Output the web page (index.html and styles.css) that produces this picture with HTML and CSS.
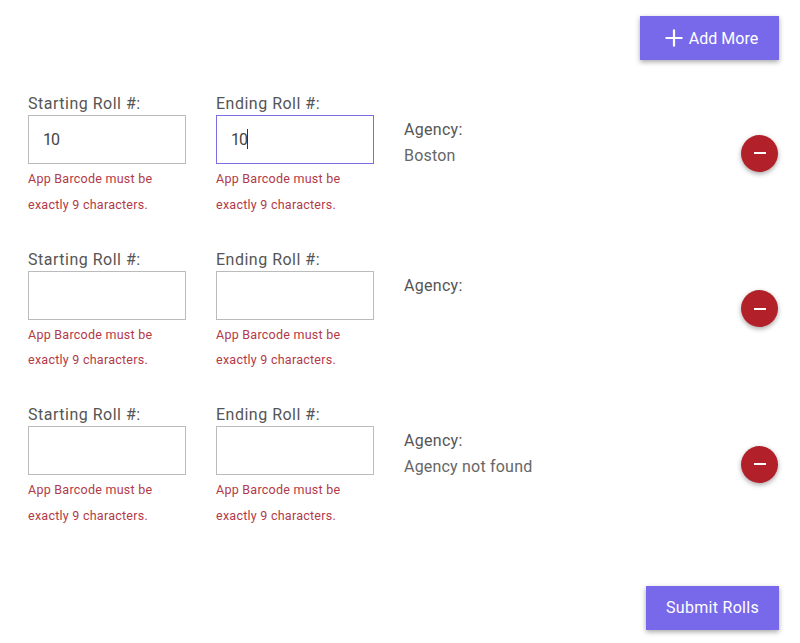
FILE: index.html
```html
<!DOCTYPE html>
<html lang="en">
  <head>
    <meta charset="UTF-8" />
    <title>Rolls</title>
    <link rel="stylesheet" href="styles.css">
  </head>
  <body>
    <div class="top-bar">
      <button class="btn btn-add">
        <svg class="plus" width="18" height="18" viewBox="0 0 18 18"><path d="M9 0.5v17M0.5 9h17" stroke="#fff" stroke-width="2.2" fill="none"/></svg>
        Add More
      </button>
    </div>

    <div class="roll-row">
      <div class="field">
        <label>Starting Roll #:</label>
        <input type="text" value="10" />
        <p class="error">App Barcode must be<br />exactly 9 characters.</p>
      </div>
      <div class="field">
        <label>Ending Roll #:</label>
        <div class="fake-input focused">10<span class="caret"></span></div>
        <p class="error">App Barcode must be<br />exactly 9 characters.</p>
      </div>
      <div class="agency">
        <div class="agency-label">Agency:</div>
        <div class="agency-value">Boston</div>
      </div>
      <button class="btn-remove"><span class="minus"></span></button>
    </div>

    <div class="roll-row">
      <div class="field">
        <label>Starting Roll #:</label>
        <input type="text" />
        <p class="error">App Barcode must be<br />exactly 9 characters.</p>
      </div>
      <div class="field">
        <label>Ending Roll #:</label>
        <input type="text" />
        <p class="error">App Barcode must be<br />exactly 9 characters.</p>
      </div>
      <div class="agency">
        <div class="agency-label">Agency:</div>
      </div>
      <button class="btn-remove"><span class="minus"></span></button>
    </div>

    <div class="roll-row">
      <div class="field">
        <label>Starting Roll #:</label>
        <input type="text" />
        <p class="error">App Barcode must be<br />exactly 9 characters.</p>
      </div>
      <div class="field">
        <label>Ending Roll #:</label>
        <input type="text" />
        <p class="error">App Barcode must be<br />exactly 9 characters.</p>
      </div>
      <div class="agency">
        <div class="agency-label">Agency:</div>
        <div class="agency-value">Agency not found</div>
      </div>
      <button class="btn-remove"><span class="minus"></span></button>
    </div>

    <div class="bottom-bar">
      <button class="btn btn-submit">Submit Rolls</button>
    </div>
  </body>
</html>
```

FILE: styles.css
```css
body,
html {
  margin: 0;
  padding: 0;
}

body {
  background: #fff;
  font-family: Roboto, "Liberation Sans", sans-serif;
  color: #555;
  height: 643px;
  overflow: hidden;
}

.top-bar {
  display: flex;
  justify-content: flex-end;
  padding: 16px 21px 0 0;
  height: 44px;
  margin-bottom: 28px;
}

.btn {
  border: 0;
  background: #7869ea;
  color: #fff;
  font-family: inherit;
  font-size: 16px;
  height: 44px;
  padding: 0;
  display: flex;
  align-items: center;
  justify-content: center;
  box-shadow: 0 2px 5px rgba(0, 0, 0, 0.35);
}

.btn-add {
  width: 139px;
  gap: 6px;
  padding-left: 4px;
  letter-spacing: 0.05px;
}

.btn-submit {
  width: 133px;
  letter-spacing: 0.3px;
}

.roll-row {
  display: flex;
  padding-left: 28px;
  padding-right: 22px;
  height: 155.6px;
  box-sizing: border-box;
  padding-top: 3px;
}

.field {
  width: 158px;
  margin-right: 30px;
  flex: none;
}

.field label {
  display: block;
  font-size: 16px;
  padding-top: 2px;
  line-height: 22px;
  letter-spacing: 0.5px;
}

.field input,
.fake-input {
  display: block;
  box-sizing: border-box;
  width: 158px;
  height: 49px;
  border: 1px solid #bbb;
  background: #fff;
  font-family: inherit;
  font-size: 16px;
  letter-spacing: -1px;
  color: #444;
  outline: none;
}

.field input {
  padding: 0 14px;
}

.fake-input {
  padding: 0 14px;
  line-height: 47px;
}

.focused {
  border-color: #7b6fe0;
}

.caret {
  display: inline-block;
  width: 1px;
  height: 20px;
  background: #333;
  vertical-align: -4px;
}

.error {
  margin: 2px 0 0;
  font-size: 12.5px;
  line-height: 25.5px;
  color: #b23a48;
  letter-spacing: 0.25px;
}

.agency {
  flex: 1;
  padding-top: 26px;
  font-size: 16px;
  line-height: 26px;
  letter-spacing: 0.2px;
}

.agency-label {
  letter-spacing: 0.3px;
}

.agency-value {
  color: #666;
}

.btn-remove {
  width: 37px;
  height: 37px;
  flex: none;
  margin-top: 43.5px;
  border: 0;
  border-radius: 50%;
  padding: 0;
  background: #b2202a;
  display: flex;
  align-items: center;
  justify-content: center;
  box-shadow: 0 2px 5px rgba(0, 0, 0, 0.35);
}

.minus {
  display: block;
  width: 12px;
  height: 2px;
  background: #fff;
}

.bottom-bar {
  display: flex;
  justify-content: flex-end;
  padding: 31.2px 21px 0 0;
}
```
